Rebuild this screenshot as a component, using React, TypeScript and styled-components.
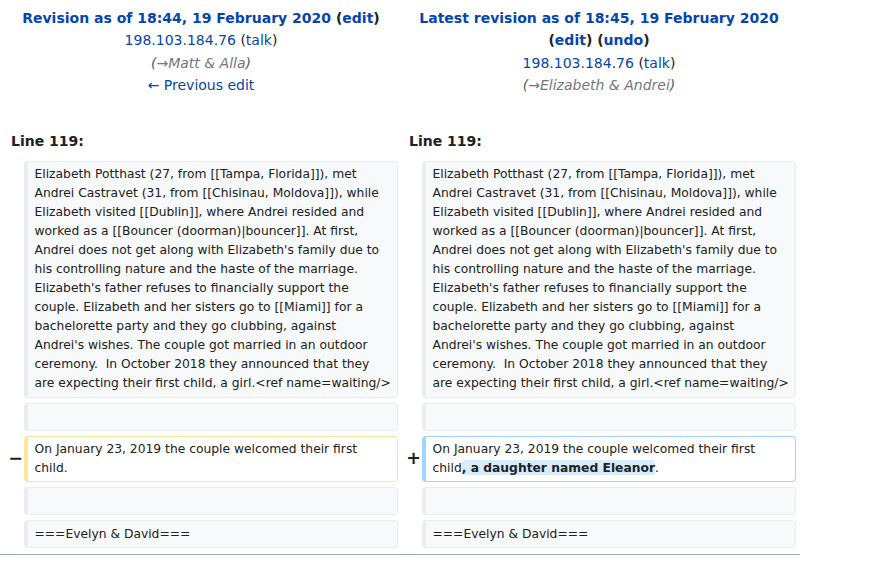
import React from "react";
import styled, { createGlobalStyle } from "styled-components";

const Global = createGlobalStyle`
  html, body { margin: 0; padding: 0; background: #ffffff; }
  body {
    font-family: "DejaVu Sans", "Noto Sans", sans-serif;
    color: #202122;
    font-size: 14px;
  }
`;

const Diff = styled.div`
  width: 800px;
  box-sizing: border-box;
  display: grid;
  grid-template-columns: 16px 1fr 16px 1fr;
  column-gap: 4px;
  row-gap: 5px;
  padding: 7px 4px 6px;
  border-bottom: 1px solid #a2a9b1;
`;

const Title = styled.div`
  grid-column: span 2;
  text-align: center;
  font-size: 14px;
  line-height: 22.4px;
  color: #202122;
`;

const Strong = styled.div`
  font-weight: bold;
`;

const Link = styled.a`
  color: #0645ad;
  text-decoration: none;
  cursor: pointer;
`;

const Comment = styled.div`
  font-style: italic;
  color: #72777d;
`;

const Paren = styled.span`
  color: #54595d;
`;

const LineNo = styled.div`
  grid-column: span 2;
  font-weight: bold;
  font-size: 14px;
  line-height: 22.4px;
  padding: 28px 7px 4px;
  color: #202122;
`;

const Marker = styled.div`
  align-self: center;
  text-align: right;
  font-weight: bold;
  font-size: 17.5px;
  line-height: 1.2;
  margin-right: -3px;
  color: #202122;
`;

type Kind = "context" | "deleted" | "added";

const borderFor: Record<Kind, string> = {
  context: "#eaecf0",
  deleted: "#ffe49c",
  added: "#a3d3ff",
};

const Cell = styled.div<{ $kind: Kind }>`
  box-sizing: border-box;
  font-size: 12.3px;
  line-height: 19px;
  padding: 3.4px 4px 3.4px 6.5px;
  border: 1px solid ${(p) => borderFor[p.$kind]};
  border-left-width: 4px;
  border-radius: 4px;
  background: ${(p) => (p.$kind === "context" ? "#f8f9fa" : "#ffffff")};
  color: #202122;
  white-space: pre-wrap;
  overflow-wrap: break-word;
`;

const Ins = styled.ins`
  text-decoration: none;
  font-weight: bold;
  background: #d8ecff;
  border-radius: 3px;
  padding: 0.5px 0;
`;

const paraLines = [
  "Elizabeth Potthast (27, from [[Tampa, Florida]]), met",
  "Andrei Castravet (31, from [[Chisinau, Moldova]]), while",
  "Elizabeth visited [[Dublin]], where Andrei resided and",
  "worked as a [[Bouncer (doorman)|bouncer]]. At first,",
  "Andrei does not get along with Elizabeth's family due to",
  "his controlling nature and the haste of the marriage.",
  "Elizabeth's father refuses to financially support the",
  "couple. Elizabeth and her sisters go to [[Miami]] for a",
  "bachelorette party and they go clubbing, against",
  "Andrei's wishes. The couple got married in an outdoor",
  "ceremony.  In October 2018 they announced that they",
  "are expecting their first child, a girl.<ref name=waiting/>",
];
const para = paraLines.join("\n");

const Empty = () => <>{"\u00a0"}</>;

export default function App() {
  return (
    <>
      <Global />
      <Diff>
        <Title>
          <Strong>
            <Link>Revision as of 18:44, 19 February 2020</Link> (<Link>edit</Link>)
          </Strong>
          <div>
            <Link>198.103.184.76</Link> (<Link>talk</Link>)
          </div>
          <Comment>
            <Paren>(</Paren>→Matt &amp; Alla<Paren>)</Paren>
          </Comment>
          <div>
            <Link>← Previous edit</Link>
          </div>
        </Title>
        <Title>
          <Strong>
            <Link>Latest revision as of 18:45, 19 February 2020</Link> (<Link>edit</Link>) (
            <Link>undo</Link>)
          </Strong>
          <div>
            <Link>198.103.184.76</Link> (<Link>talk</Link>)
          </div>
          <Comment>
            <Paren>(</Paren>→Elizabeth &amp; Andrei<Paren>)</Paren>
          </Comment>
        </Title>

        <LineNo>Line 119:</LineNo>
        <LineNo>Line 119:</LineNo>

        <Marker />
        <Cell $kind="context">{para}</Cell>
        <Marker />
        <Cell $kind="context">{para}</Cell>

        <Marker />
        <Cell $kind="context">
          <Empty />
        </Cell>
        <Marker />
        <Cell $kind="context">
          <Empty />
        </Cell>

        <Marker>−</Marker>
        <Cell $kind="deleted">On January 23, 2019 the couple welcomed their first child.</Cell>
        <Marker>+</Marker>
        <Cell $kind="added">
          On January 23, 2019 the couple welcomed their first child
          <Ins>, a daughter named Eleanor</Ins>.
        </Cell>

        <Marker />
        <Cell $kind="context">
          <Empty />
        </Cell>
        <Marker />
        <Cell $kind="context">
          <Empty />
        </Cell>

        <Marker />
        <Cell $kind="context">===Evelyn &amp; David===</Cell>
        <Marker />
        <Cell $kind="context">===Evelyn &amp; David===</Cell>
      </Diff>
    </>
  );
}
